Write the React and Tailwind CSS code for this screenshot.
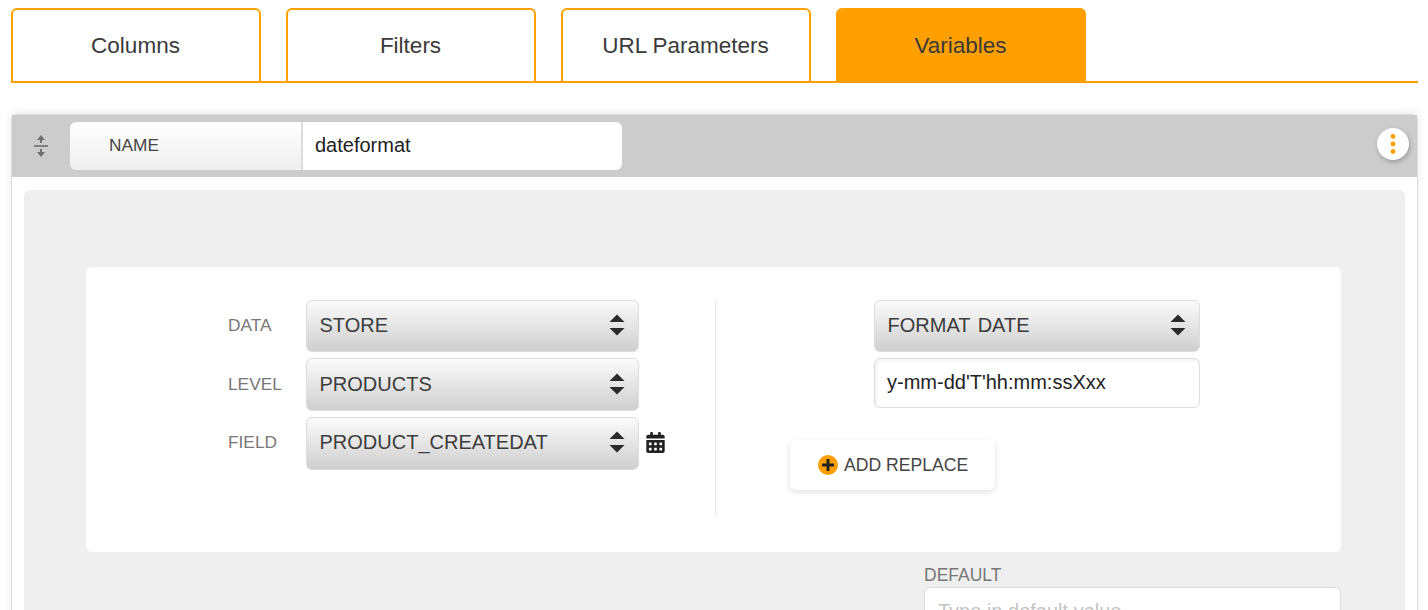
import { FaCalendarAlt } from 'react-icons/fa';

const tabs = ['Columns', 'Filters', 'URL Parameters', 'Variables'];

function UpDown() {
  return (
    <svg width="18" height="22" viewBox="0 0 18 22" className="shrink-0">
      <path d="M9 0.5L16.5 8H1.5Z M9 21.5L1.5 14H16.5Z" fill="#2b2b2b" />
    </svg>
  );
}

function Select({ label, className = '' }) {
  return (
    <div className={`flex items-center justify-between pl-[12.5px] pr-3 rounded-md border border-[#dddddd] bg-gradient-to-b from-[#fbfbfb] to-[#cfcfcf] text-[20px] text-[#3c3c3c] ${className}`}>
      <span>{label}</span>
      <UpDown />
    </div>
  );
}

function Row({ label, value, children, height = 'h-[52px] pb-[2px]', labelClass = '' }) {
  return (
    <div className="flex items-center">
      <span className={`w-[78px] text-[17.3px] text-[#777777] ${labelClass}`}>{label}</span>
      <Select label={value} className={`w-[333px] ${height}`} />
      {children}
    </div>
  );
}

export default function App() {
  return (
    <div className="h-screen overflow-hidden bg-white pl-[10.5px] pr-[10px] pt-2 font-['Liberation_Sans',Arial,sans-serif]">
      <div className="flex gap-[25px] border-b-2 border-[#ffa000]">
        {tabs.map((t, i) => (
          <div
            key={t}
            className={`w-[250px] h-[73px] flex items-center justify-center rounded-t-md text-[22.5px] text-[#3a3a3a] border-2 border-b-0 border-[#ffa000] ${i === 3 ? 'bg-[#ffa000]' : 'bg-white'}`}
          >
            {t}
          </div>
        ))}
      </div>

      <div className="ml-[0.5px] mt-[31px] rounded-t-md border border-[#dcdcdc] shadow-[0_-2px_8px_rgba(0,0,0,0.08)]">
        <div className="h-[62px] bg-[#cccccc] flex items-start pt-[7px] pl-[20px] pr-[8px]">
          <svg width="18" height="24" viewBox="0 0 18 24" className="shrink-0 mt-[12px]">
            <path d="M9 1L13 6H10V9H8V6H5Z M9 23L5 18H8V15H10V18H13Z" fill="#707070" />
            <rect x="2" y="11" width="14" height="2" fill="#808080" />
          </svg>
          <div className="ml-[20px] flex w-[552px] h-[48px] rounded-md overflow-hidden">
            <div className="w-[233px] pl-[39px] flex items-center border-r-2 border-[#dddddd] bg-gradient-to-b from-[#ffffff] to-[#efefef] text-[17.3px] text-[#444444]">
              NAME
            </div>
            <div className="flex-1 pl-[12px] pb-[2px] flex items-center bg-white text-[20px] text-[#222222]">
              dateformat
            </div>
          </div>
          <div className="ml-auto mt-[6px] w-8 h-8 rounded-full bg-white shadow-[1px_2px_4px_rgba(0,0,0,0.25)] flex items-center justify-center">
            <svg width="6" height="20" viewBox="0 0 6 20">
              <circle cx="3" cy="2.5" r="2.4" fill="#ffa000" />
              <circle cx="3" cy="10" r="2.4" fill="#ffa000" />
              <circle cx="3" cy="17.5" r="2.4" fill="#ffa000" />
            </svg>
          </div>
        </div>

        <div className="px-3 pt-[13px]">
          <div className="rounded-t-md bg-[#efefef] pt-[77px] pl-[62px] pr-[64px] h-[500px]">
            <div className="flex h-[285px] rounded-md bg-white pt-[33px]">
              <div className="w-[630px] h-[216px] pl-[142px] border-r border-[#e6e6e6] flex flex-col gap-[6px]">
                <Row label="DATA" value="STORE" />
                <Row label="LEVEL" value="PRODUCTS" height="h-[53px] pb-[2px]" />
                <Row label="FIELD" value="PRODUCT_CREATEDAT" height="h-[53px] pb-[4px]" labelClass="pb-[2px]">
                  <FaCalendarAlt className="ml-[7px] mb-[2px] text-[#222222] w-[19px] h-[21px]" />
                </Row>
              </div>
              <div className="pl-[74px] flex flex-col">
                <div className="ml-[84px] w-[326px] flex flex-col gap-[6px]">
                  <Select label="FORMAT DATE" className="h-[52px] pb-[2px] to-[#c8c8c8] [word-spacing:2px]" />
                  <div className="h-[50px] pl-[12px] pb-[2px] flex items-center rounded-md border border-[#dddddd] bg-white shadow-[inset_2px_2px_3px_rgba(0,0,0,0.05)] text-[20px] text-[#222222]">
                    y-mm-dd'T'hh:mm:ssXxx
                  </div>
                </div>
                <div className="mt-[32px] w-[205px] h-[50px] pl-[28px] flex items-center gap-[6px] rounded-md bg-white shadow-[0_2px_6px_rgba(0,0,0,0.12)] text-[17.6px] text-[#444444]">
                  <span className="w-5 h-5 rounded-full bg-[#ffa000] flex items-center justify-center">
                    <svg width="14" height="14" viewBox="0 0 14 14">
                      <path d="M7 1V13M1 7H13" stroke="#222222" strokeWidth="3" />
                    </svg>
                  </span>
                  ADD REPLACE
                </div>
              </div>
            </div>

            <div className="ml-auto w-[417px] mt-[13px]">
              <div className="text-[17.5px] leading-[20px] text-[#777777]">DEFAULT</div>
              <div className="mt-[2px] h-[50px] pl-[13px] pt-[8px] rounded-md border border-[#dddddd] bg-white text-[20px] text-[#c4c4c4]">
                Type in default value
              </div>
            </div>
          </div>
        </div>
      </div>
    </div>
  );
}
